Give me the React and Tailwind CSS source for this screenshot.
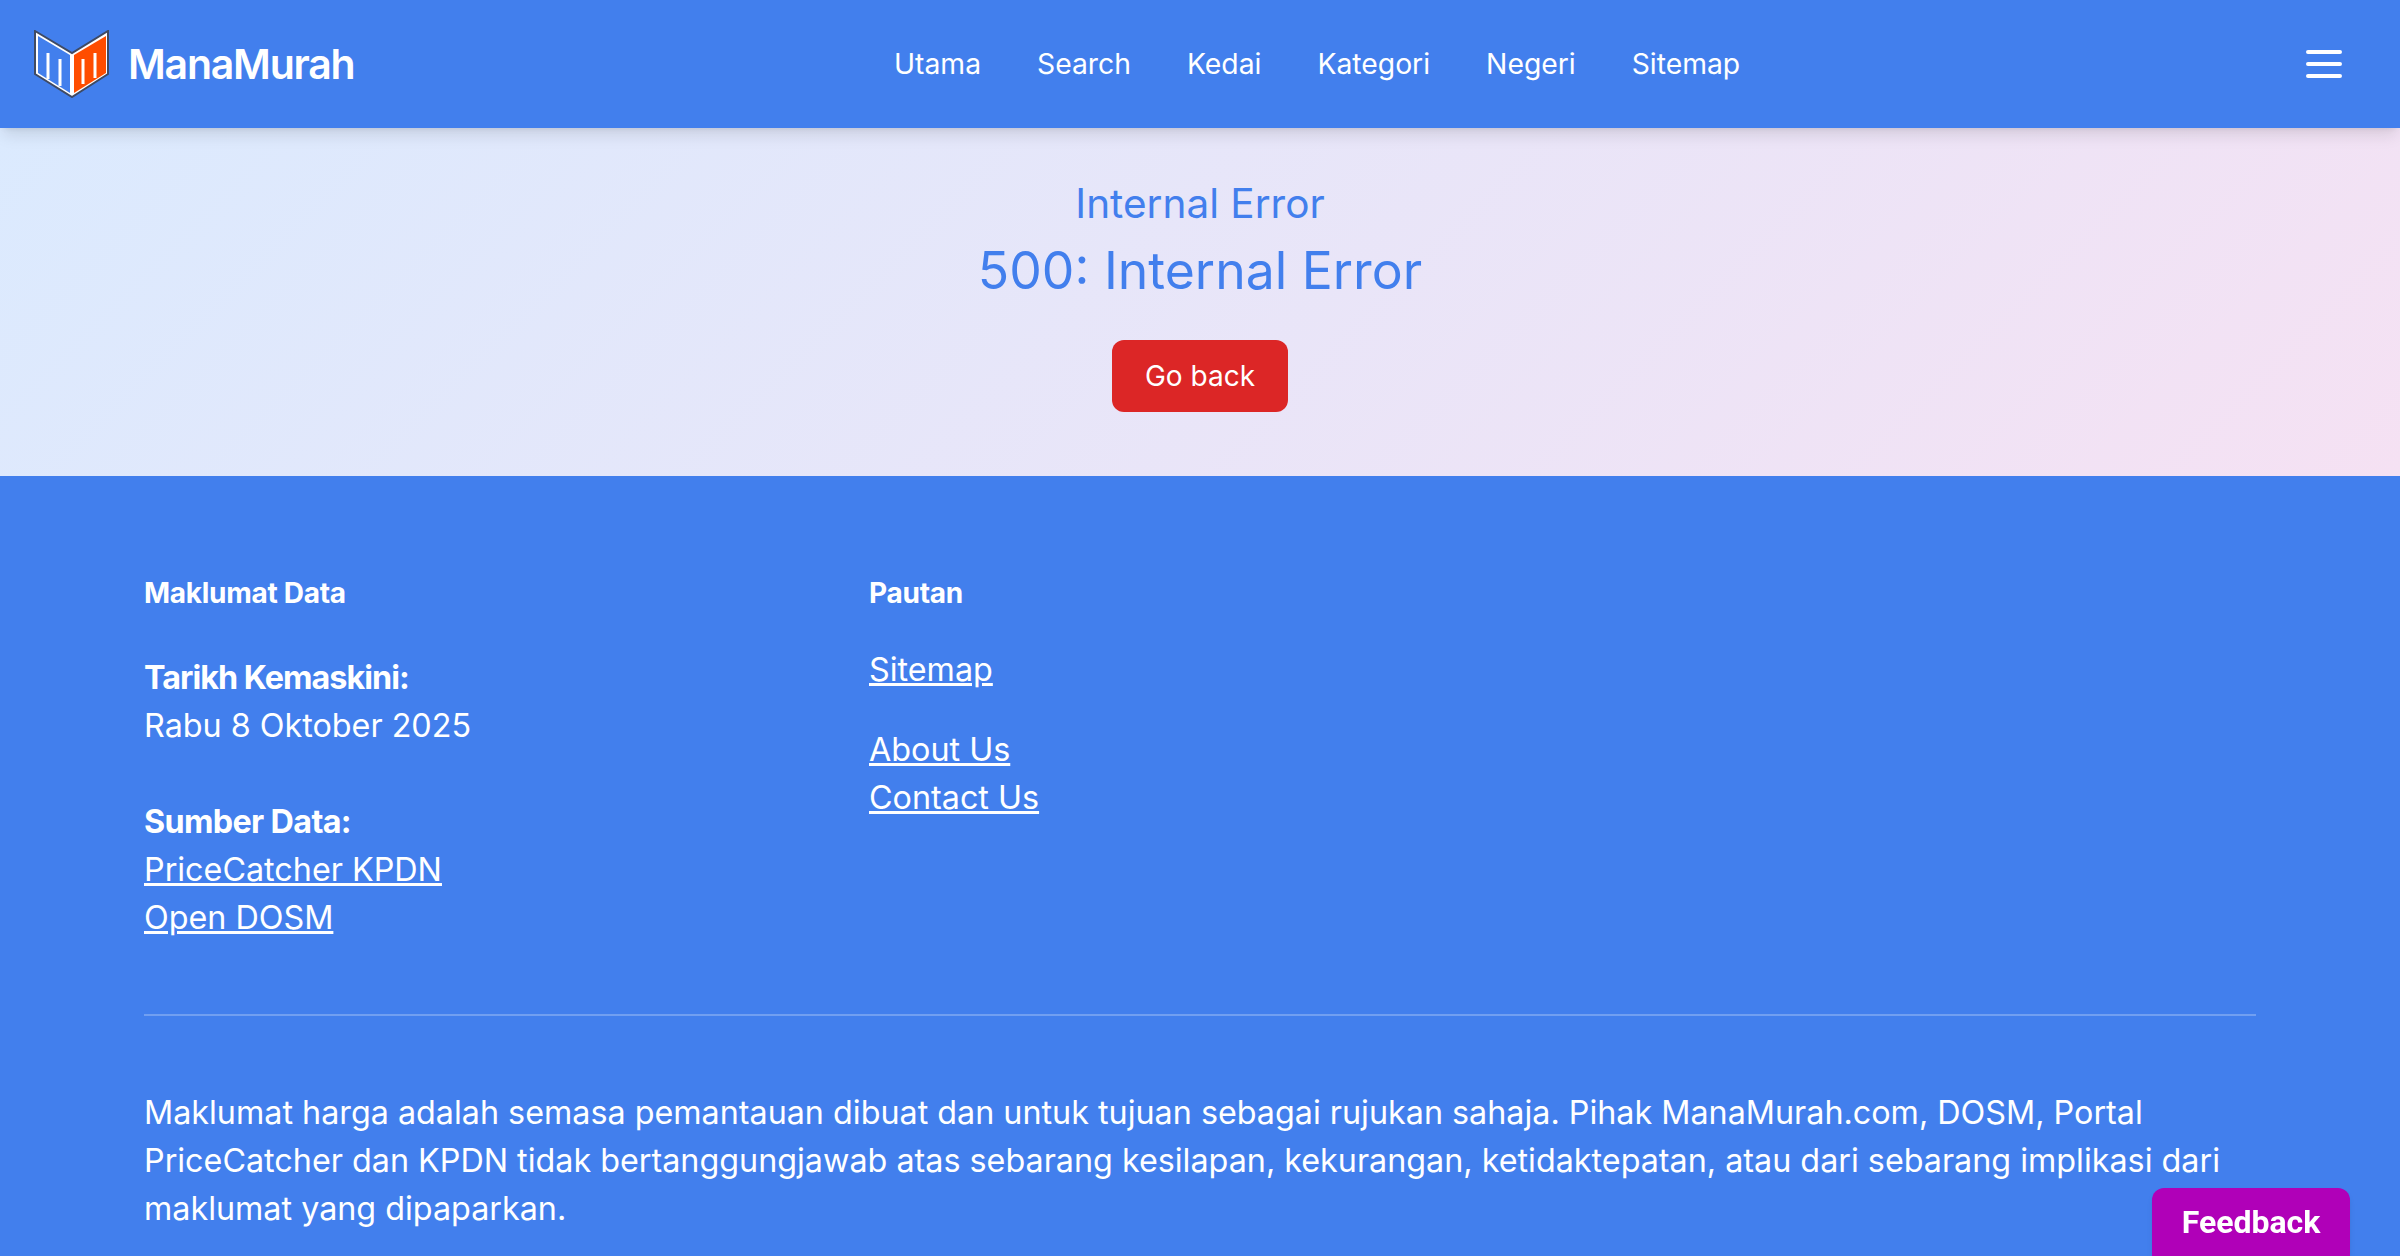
const navLinks = ["Utama", "Search", "Kedai", "Kategori", "Negeri", "Sitemap"];

function Logo() {
  return (
    <svg viewBox="0 0 75 68" className="w-[75px] h-[68px]">
      <path d="M1 1 L38 23 L74 1 V44 L38 67 L1 44 Z" fill="#fff" stroke="#3f4a63" strokeWidth="2" />
      <path d="M4 6 L36 25 V63 L4 43 Z" fill="#427fed" />
      <path d="M40 25 L72 6 V43 L40 63 Z" fill="#ff4d00" />
      <path d="M14 23 V49 M26 29 V56 M49 29 V54 M61 23 V48" fill="none" stroke="#fff" strokeWidth="3" />
    </svg>
  );
}

function Burger() {
  return (
    <svg viewBox="0 0 36 28" className="w-[36px] h-[28px]" fill="none" stroke="currentColor" strokeWidth="4" strokeLinecap="round">
      <path d="M2 2h32M2 14h32M2 26h32" />
    </svg>
  );
}

export default function App() {
  return (
    <div className="min-h-screen font-['Inter',sans-serif] text-[32.3px] leading-[48px] text-white bg-[#427fed]">
      {/* Header */}
      <header className="relative z-10 h-[128px] flex items-center bg-[#427fed] shadow-lg">
        <div className="flex items-center gap-[19px] pl-[34px] w-[894px]">
          <Logo />
          <span className="text-[41px] font-semibold tracking-[-0.03em]">ManaMurah</span>
        </div>
        <nav className="flex items-center gap-14 text-[28.3px]">
          {navLinks.map((l) => (
            <a key={l} href="#">{l}</a>
          ))}
        </nav>
        <div className="ml-auto mr-[58px] flex">
          <Burger />
        </div>
      </header>

      {/* Error */}
      <main className="h-[348px] flex flex-col items-center bg-[linear-gradient(135deg,#dbeafe,#f5e1f3)] text-[#427fed] pt-[50px]">
        <div className="text-[40.5px] leading-[52px]">Internal Error</div>
        <h1 className="text-[51.7px] leading-[66px] mt-[7px]">500: Internal Error</h1>
        <button className="mt-[37px] w-[176px] h-[72px] rounded-xl bg-[#dc2626] text-white text-[28px]">Go back</button>
      </main>

      {/* Footer */}
      <footer className="px-[144px] pt-[93px]">
        <div className="grid grid-cols-[725px_1fr] pb-[72px] border-b-2 border-white/25">
          <div>
            <h3 className="text-[28px] leading-[48px] font-bold tracking-[-0.01em]">Maklumat Data</h3>
            <p className="mt-[37px] font-bold tracking-[-0.03em]">Tarikh Kemaskini:</p>
            <p>Rabu 8 Oktober 2025</p>
            <p className="mt-[48px] font-bold tracking-[-0.02em]">Sumber Data:</p>
            <a href="#" className="block underline">PriceCatcher KPDN</a>
            <a href="#" className="block underline">Open DOSM</a>
          </div>
          <div>
            <h3 className="text-[28px] leading-[48px] font-bold tracking-[-0.01em]">Pautan</h3>
            <a href="#" className="block mt-[29px] underline">Sitemap</a>
            <a href="#" className="block mt-[32px] underline">About Us</a>
            <a href="#" className="block underline">Contact Us</a>
          </div>
        </div>
        <p className="mt-[73px] pb-[72px]">
          Maklumat harga adalah semasa pemantauan dibuat dan untuk tujuan sebagai rujukan sahaja. Pihak ManaMurah.com, DOSM, Portal PriceCatcher dan KPDN tidak bertanggungjawab atas sebarang kesilapan, kekurangan, ketidaktepatan, atau dari sebarang implikasi dari maklumat yang dipaparkan.
        </p>
      </footer>

      <button className="fixed right-[50px] bottom-0 w-[198px] h-[68px] rounded-t-xl bg-[#b000b8] shadow-md font-['Roboto',sans-serif] font-bold text-[32px] leading-none">
        Feedback
      </button>
    </div>
  );
}
